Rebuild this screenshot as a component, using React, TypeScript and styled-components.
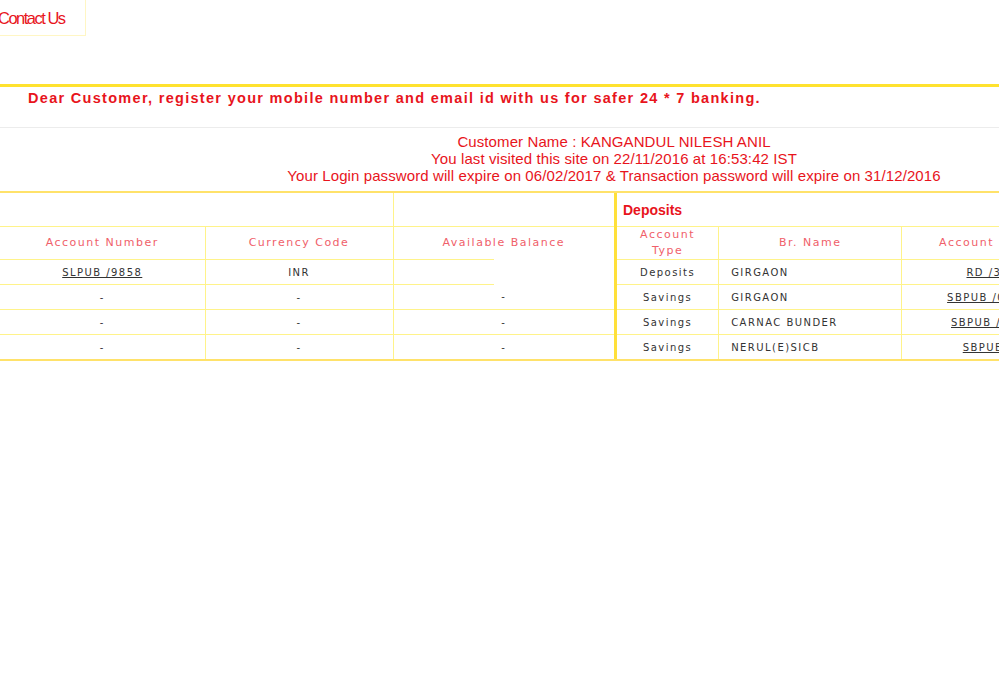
import React from "react";
import styled, { createGlobalStyle } from "styled-components";

const GRID = "#fff38a";
const RED = "#e8141c";
const HEAD_RED = "#f0606a";

const Global = createGlobalStyle`
  html, body { margin: 0; padding: 0; overflow: hidden; background: #fff; }
  body { font-family: "Liberation Sans", Arial, sans-serif; }
`;

const Page = styled.div`
  width: 1228px;
`;

const TopBar = styled.div`
  height: 84px;
  display: flex;
  align-items: flex-start;
`;

const ContactBox = styled.a`
  display: flex;
  align-items: center;
  width: 88px;
  height: 36px;
  margin-left: -2px;
  box-sizing: border-box;
  border-right: 1px solid #fff6c4;
  border-bottom: 1px solid #fff6c4;
  color: ${RED};
  font-size: 16.5px;
  letter-spacing: -1.5px;
  text-decoration: none;
  padding-top: 1px;
`;

const Banner = styled.div`
  border-top: 3px solid #ffe22e;
  border-bottom: 1px solid #ececec;
  height: 44px;
  box-sizing: border-box;
  padding: 3px 0 0 28px;
  color: ${RED};
  font-weight: bold;
  font-size: 14.5px;
  letter-spacing: 1.3px;
`;

const Info = styled.div`
  text-align: center;
  color: ${RED};
  font-size: 15px;
  letter-spacing: 0.1px;
  line-height: 17px;
  padding: 5px 0 7px;
`;

const Tables = styled.div`
  display: flex;
  border-top: 2px solid #ffe26a;
  border-bottom: 2px solid #ffe26a;
`;

const Table = styled.table<{ $divider?: boolean }>`
  width: 614px;
  border-collapse: collapse;
  table-layout: fixed;
  font-family: "DejaVu Sans", Verdana, sans-serif;
  ${(p) => (p.$divider ? `border-left: 3px solid #ffe03a;` : "")}
`;

const GroupCell = styled.td`
  height: 33px;
  padding: 0;
  border-right: 1px solid ${GRID};
  border-bottom: 1px solid ${GRID};
`;

const GroupTitle = styled.td`
  height: 33px;
  padding: 0 0 0 6px;
  border-bottom: 1px solid ${GRID};
  color: ${RED};
  font-family: "Liberation Sans", Arial, sans-serif;
  font-weight: bold;
  font-size: 14px;
`;

const Head = styled.th<{ $partial?: boolean }>`
  height: 32px;
  padding: 0 10px;
  font-weight: normal;
  font-size: 11px;
  letter-spacing: 1.5px;
  line-height: 16px;
  color: ${HEAD_RED};
  text-align: center;
  white-space: normal;
  border-right: 1px solid ${GRID};
  border-bottom: ${(p) => (p.$partial ? "none" : `1px solid ${GRID}`)};
  ${(p) =>
    p.$partial
      ? `background: linear-gradient(${GRID}, ${GRID}) no-repeat left bottom / 100px 1px;`
      : ""}
`;

const Cell = styled.td<{ $align?: string; $partial?: boolean; $last?: boolean }>`
  height: 24px;
  padding: 0 ${(p) => (p.$align === "left" ? "12px" : "0")};
  font-size: 10px;
  letter-spacing: 1.45px;
  color: #333;
  text-align: ${(p) => p.$align || "center"};
  white-space: nowrap;
  overflow: visible;
  border-right: 1px solid ${GRID};
  border-bottom: ${(p) => (p.$partial || p.$last ? "none" : `1px solid ${GRID}`)};
  ${(p) =>
    p.$partial
      ? `background: linear-gradient(${GRID}, ${GRID}) no-repeat left bottom / 100px 1px;`
      : ""}
`;

const AccLink = styled.a`
  color: #333;
  text-decoration: underline;
`;

const leftRows = [
  { acc: "SLPUB /9858", cur: "INR", bal: "" },
  { acc: "-", cur: "-", bal: "-" },
  { acc: "-", cur: "-", bal: "-" },
  { acc: "-", cur: "-", bal: "-" },
];

const rightRows = [
  { type: "Deposits", br: "GIRGAON", acc: "RD /3012" },
  { type: "Savings", br: "GIRGAON", acc: "SBPUB /001234" },
  { type: "Savings", br: "CARNAC BUNDER", acc: "SBPUB /01234" },
  { type: "Savings", br: "NERUL(E)SICB", acc: "SBPUB /12" },
];

export default function App() {
  return (
    <Page>
      <Global />
      <TopBar>
        <ContactBox href="#">Contact Us</ContactBox>
      </TopBar>
      <Banner>Dear Customer, register your mobile number and email id with us for safer 24 * 7 banking.</Banner>
      <Info>
        <div>Customer Name : KANGANDUL NILESH ANIL</div>
        <div>You last visited this site on 22/11/2016 at 16:53:42 IST</div>
        <div>Your Login password will expire on 06/02/2017 &amp; Transaction password will expire on 31/12/2016</div>
      </Info>
      <Tables>
        <Table>
          <colgroup>
            <col style={{ width: 205 }} />
            <col style={{ width: 188 }} />
            <col style={{ width: 221 }} />
          </colgroup>
          <tbody>
            <tr>
              <GroupCell colSpan={2} />
              <GroupCell style={{ borderRight: "none" }} />
            </tr>
            <tr>
              <Head>Account Number</Head>
              <Head>Currency Code</Head>
              <Head $partial style={{ borderRight: "none" }}>Available Balance</Head>
            </tr>
            {leftRows.map((r, i) => (
              <tr key={i}>
                <Cell $last={i === 3}>{r.acc === "-" ? "-" : <AccLink href="#">{r.acc}</AccLink>}</Cell>
                <Cell $last={i === 3}>{r.cur}</Cell>
                <Cell $partial={i === 0} $last={i === 3} style={{ borderRight: "none" }}>{r.bal}</Cell>
              </tr>
            ))}
          </tbody>
        </Table>
        <Table $divider>
          <colgroup>
            <col style={{ width: 103 }} />
            <col style={{ width: 183 }} />
            <col style={{ width: 187 }} />
            <col style={{ width: 138 }} />
          </colgroup>
          <tbody>
            <tr>
              <GroupTitle colSpan={4}>Deposits</GroupTitle>
            </tr>
            <tr>
              <Head>Account Type</Head>
              <Head>Br. Name</Head>
              <Head style={{ whiteSpace: "nowrap" }}>Account Number</Head>
              <Head>Balance</Head>
            </tr>
            {rightRows.map((r, i) => (
              <tr key={i}>
                <Cell $last={i === 3}>{r.type}</Cell>
                <Cell $align="left" $last={i === 3}>{r.br}</Cell>
                <Cell $last={i === 3}><AccLink href="#">{r.acc}</AccLink></Cell>
                <Cell $last={i === 3}>0.00</Cell>
              </tr>
            ))}
          </tbody>
        </Table>
      </Tables>
    </Page>
  );
}
